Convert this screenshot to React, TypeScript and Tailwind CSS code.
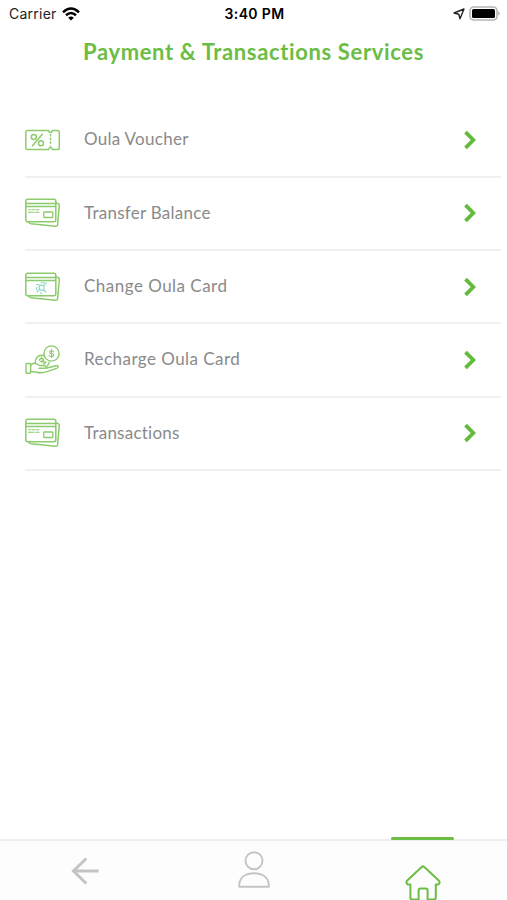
import type { ReactNode } from 'react';

function Svg({ children, className, box }: { children: ReactNode; className: string; box: string }) {
  return (
    <svg viewBox={box} className={className} fill="none" stroke="currentColor" strokeLinecap="round" strokeLinejoin="round">
      {children}
    </svg>
  );
}

function VoucherIcon() {
  return (
    <Svg box="0 0 36 30" className="h-[30px] w-[36px]">
      <g strokeWidth="1.5">
        <path d="M2.5 5.5H23.5q.5 2 2 2t2-2H32.500q1.8 0 1.8 1.8V22.7q0 1.8-1.8 1.8H27.5q-.5-2-2-2t-2 2H2.5Q.8 24.500.8 22.700V7.300Q.8 5.500 2.500 5.500Z" />
        <path d="M25.500 9.500V21" strokeDasharray="1.200 2.600" />
        <circle cx="8.800" cy="11.900" r="2.500" />
        <circle cx="16" cy="18.300" r="2.500" />
        <path d="M17.300 9.200 7.500 20.800" />
      </g>
    </Svg>
  );
}

function CardIcon({ swap = false }: { swap?: boolean }) {
  return (
    <Svg box="0 0 36 30" className="h-[30px] w-[36px]">
      <g strokeWidth="1.5">
        <rect x=".8" y="1.200" width="30" height="22.500" rx="2" />
        <path d="M1 5.500H30.500M1 8.500H30.500" />
        <path d="M31.200 5 32.900 5.400Q34.500 5.800 34.300 7.500L32.600 26.500Q32.400 28.600 30.300 28.300L6 25.700Q4.500 25.500 3.500 23.800" />
      </g>
      {swap ? (
        <g stroke="#8fd6c4" strokeWidth="1.100">
          <circle cx="16.700" cy="15.700" r="2.600" />
          <path d="M11.500 12.500h2l1 1M19 13.500l2.500-3M12 20l2.500-2.500M18.500 18l2.500 2M11.500 15.500v2M16 10.700h3.500M17 21h-1.500" />
        </g>
      ) : (
        <g strokeWidth="1.300">
          <rect x="18.800" y="14" width="9" height="5.500" rx=".5" />
          <path d="M3.500 11.700h2M7 11.700h3M11.500 11.700h2.500M3.500 14.200h5M10 14.200h4" strokeWidth="1.100" />
        </g>
      )}
    </Svg>
  );
}

function RechargeIcon() {
  return (
    <Svg box="0 0 36 30" className="h-[30px] w-[36px]">
      <g strokeWidth="1.400">
        <circle cx="26.500" cy="8.500" r="7.600" />
        <path d="M28.600 6.700Q28 5.700 26.500 5.700q-2 0-2 1.400t2 1.400q2.200 0 2.200 1.500t-2.200 1.500q-1.700 0-2.300-1.100M26.500 4.500v8.200" strokeWidth="1.100" />
        <path d="M10.200 17.500Q10.500 10.500 17 10.200l2.200.3M24.300 17.200q-.5 2-2 3.800" />
        <path d="M14.500 15.200q.2-1.700 2-1.700t2 1.300-2 1.500 2.300.5-.3 2.100M16.500 12.400v1" />
        <path d="M1 19.200q0-.7.800-.7H4.800q.8 0 .8.700v8.300q0 .8-.8.800H1.800q-.8 0-.8-.8Z" />
        <path d="M5.800 20.200Q8 17.500 11 18.700L14.500 20.500H19q2.300.2 2.100 1.500t-2.200 1.300H14M21.200 23.200 31 20.800q2-.5 2.300.7.200 1.100-1.600 1.800L22 26.700Q17 28.500 11.500 27.300L5.800 26.500" />
      </g>
    </Svg>
  );
}

const rows = [
  { label: 'Oula Voucher', spacing: 'tracking-[0.28px]', icon: <VoucherIcon /> },
  { label: 'Transfer Balance', spacing: 'tracking-[0.26px]', icon: <CardIcon /> },
  { label: 'Change Oula Card', spacing: 'tracking-[0.48px]', icon: <CardIcon swap /> },
  { label: 'Recharge Oula Card', spacing: 'tracking-[0.45px]', icon: <RechargeIcon /> },
  { label: 'Transactions', spacing: 'tracking-[0.24px]', icon: <CardIcon /> },
];

function StatusBar() {
  return (
    <header className="grid h-[27px] grid-cols-3 items-center pr-[7px] pl-[9px] font-['Inter',sans-serif] text-[14px] text-[#222]">
      <div className="flex items-center gap-[5px]">
        <span className="tracking-[0.25px]">Carrier</span>
        <svg viewBox="0 0 18 14" className="h-[14px] w-[18px]" fill="none" stroke="#000" strokeWidth="2.500">
          <path d="M1 5.300Q9-2.300 17 5.300M4 8.300q5-4.500 10 0" />
          <path d="M9 13.500 6.200 10.700Q9 8.300 11.800 10.700Z" fill="#000" stroke="none" />
        </svg>
      </div>
      <span className="text-center font-semibold tracking-[0.35px] whitespace-nowrap text-black">3:40 PM</span>
      <div className="flex items-center justify-end gap-[4px]">
        <svg viewBox="0 0 12 12" className="h-3 w-3" fill="none" stroke="#222" strokeWidth="1.400" strokeLinejoin="round">
          <path d="M11 1 7 10.800 5.800 6.200 1 5Z" />
        </svg>
        <svg viewBox="0 0 31 15" className="h-[15px] w-[31px]">
          <rect x="1" y="1" width="27" height="13" rx="3.800" fill="#fff" stroke="#b5b5b5" strokeWidth="1.600" />
          <rect x="3" y="3" width="23" height="9" rx="1.500" fill="#000" />
          <path d="M29.300 5.300q1.500.8 1.500 2.200t-1.500 2.200Z" fill="#aaa" />
        </svg>
      </div>
    </header>
  );
}

export default function App() {
  return (
    <div className="flex h-[900px] w-full flex-col overflow-hidden bg-white font-['Lato',sans-serif]">
      <StatusBar />
      <h1 className="mt-[9px] h-8 text-center text-[22px] leading-8 font-bold tracking-[0.64px] whitespace-nowrap text-[#6cbd45]">
        Payment &amp; Transactions Services
      </h1>
      <ul className="mt-[36.500px] mr-[6px] ml-[25px]">
        {rows.map((row) => (
          <li key={row.label} className="flex h-[73.3px] items-center border-b-2 border-[#f0f0f0] pr-[25px] text-[#8bcb6b]">
            <div className="w-[59px] shrink-0">{row.icon}</div>
            <span className={`grow pb-[2px] text-[17px] text-[#8a8a8a] ${row.spacing}`}>{row.label}</span>
            <svg viewBox="0 0 12 20" className="h-5 w-3" fill="none" stroke="#62bb3d" strokeWidth="3.800">
              <path d="M1.500 2.200 9.300 10 1.500 17.800" />
            </svg>
          </li>
        ))}
      </ul>
      <nav className="relative mt-auto grid h-[61px] shrink-0 grid-cols-3 border-t-2 border-[#eeeeee] bg-[#fdfdfd]">
        <div className="flex justify-center pt-[16px]">
          <svg viewBox="0 0 28 28" className="h-7 w-7" fill="none" stroke="#c4c4c4" strokeWidth="3">
            <path d="M15.300 1.500 2.500 14 15.300 26.500M2.500 14H27.500" />
          </svg>
        </div>
        <div className="flex justify-center pt-[10px]">
          <Svg box="0 0 32 37" className="h-[37px] w-8 text-[#c4c4c4]">
            <g strokeWidth="1.900">
              <circle cx="16" cy="9.700" r="8.500" />
              <path d="M1.200 35.700V33.500C2 26 8 22.300 16 22.300S30 26 30.800 33.500v2.200Z" />
            </g>
          </Svg>
        </div>
        <div className="flex justify-center pt-[24px]">
          <Svg box="0 0 36 36" className="h-9 w-9 text-[#6cbd45]">
            <path strokeWidth="2" d="M16.700 1.900Q18 .8 19.300 1.900L34 15.700Q35.500 18 33.200 19.600H30.800V32.500Q30.800 34.600 28.700 34.600H22.600V25.500Q22.600 23.600 20.700 23.600H15.500Q13.600 23.600 13.600 25.500V34.600H7.500Q5.400 34.600 5.400 32.500V19.600H2.800Q.5 18 2 15.700Z" />
          </Svg>
        </div>
        <span className="absolute top-[-4.500px] left-[391px] h-[3.500px] w-[63px] rounded-full bg-[#6cbd45]" />
      </nav>
    </div>
  );
}
